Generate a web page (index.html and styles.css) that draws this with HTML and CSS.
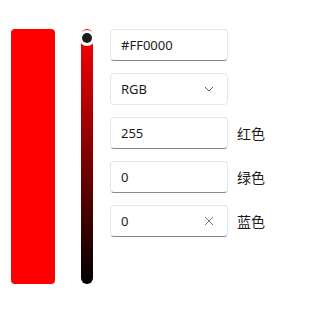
FILE: index.html
```html
<!DOCTYPE html>
<html>
<head>
<meta charset="utf-8">
<link rel="stylesheet" href="styles.css">
</head>
<body>
<div class="picker">
  <div class="swatch"></div>
  <div class="slider">
    <div class="track"></div>
    <div class="thumb"><div class="thumb-dot"></div></div>
  </div>
  <div class="fields">
    <div class="row">
      <div class="textbox"><span class="value">#FF0000</span></div>
    </div>
    <div class="row">
      <div class="combo"><span class="value">RGB</span>
        <svg class="chev" width="10" height="6" viewBox="0 0 10 6"><path d="M1 1 L5 5 L9 1" fill="none" stroke="#5c5c5c" stroke-width="1"/></svg>
      </div>
    </div>
    <div class="row">
      <div class="textbox"><span class="value">255</span></div>
      <span class="label">红色</span>
    </div>
    <div class="row">
      <div class="textbox"><span class="value">0</span></div>
      <span class="label">绿色</span>
    </div>
    <div class="row">
      <div class="textbox"><span class="value">0</span>
        <svg class="clear" width="10" height="10" viewBox="0 0 10 10"><path d="M1 1 L9 9 M9 1 L1 9" fill="none" stroke="#7a7a7a" stroke-width="1"/></svg>
      </div>
      <span class="label">蓝色</span>
    </div>
  </div>
</div>
</body>
</html>
```
FILE: styles.css
```css
html, body {
  margin: 0;
  padding: 0;
  background: #ffffff;
}
body {
  font-family: "Segoe UI", "Noto Sans", "Noto Sans CJK SC", sans-serif;
  font-size: 14px;
  color: #1b1b1b;
}
.picker {
  display: flex;
  align-items: flex-start;
  padding: 29px 0 0 11px;
}
.swatch {
  width: 44px;
  height: 255px;
  background: #ff0000;
  border-radius: 4px;
}
.slider {
  position: relative;
  width: 12px;
  height: 255px;
  margin-left: 26px;
}
.track {
  width: 12px;
  height: 255px;
  border-radius: 6px;
  background: linear-gradient(to bottom, #ff0000, #000000);
}
.thumb {
  position: absolute;
  left: -2px;
  top: 0.5px;
  width: 16px;
  height: 16px;
  border-radius: 50%;
  background: #ffffff;
  display: flex;
  align-items: center;
  justify-content: center;
}
.thumb-dot {
  width: 10px;
  height: 10px;
  border-radius: 50%;
  background: #1c1c1c;
}
.fields {
  display: flex;
  flex-direction: column;
  gap: 12px;
  margin-left: 17px;
}
.row {
  display: flex;
  align-items: center;
  gap: 9px;
}
.textbox, .combo {
  box-sizing: border-box;
  width: 118px;
  height: 32px;
  display: flex;
  align-items: center;
  justify-content: space-between;
  padding: 0 13px 0 10px;
  background: #ffffff;
  border: 1px solid #e6e6e6;
  border-radius: 4px;
}
.textbox {
  border-bottom-color: #8a8a8a;
}
.value {
  font-size: 13px;
  line-height: 20px;
}
.label {
  font-family: "Noto Sans CJK SC", sans-serif;
  font-size: 14px;
  color: #1b1b1b;
}
.chev, .clear {
  display: block;
}
```
